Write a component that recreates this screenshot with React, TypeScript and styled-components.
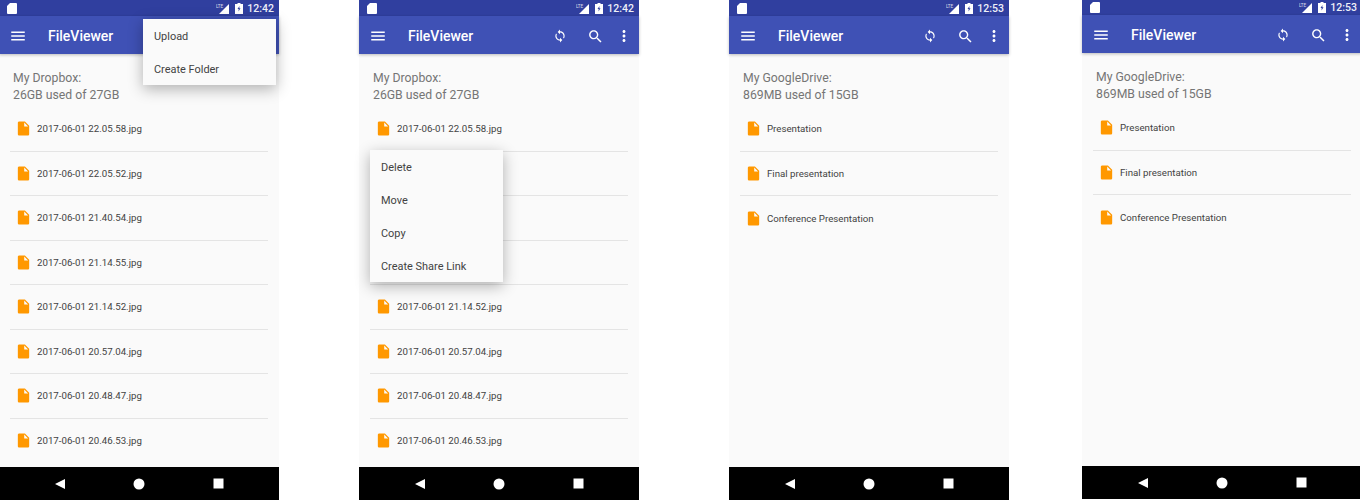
import type { ReactNode } from 'react'
import styled, { createGlobalStyle } from 'styled-components'

interface MenuProps {
  $left: number
  $top: number
}

interface PhoneProps {
  $width: number
  $gap: number
  $lift?: boolean
}

const GlobalStyle = createGlobalStyle`
  html, body {
    margin: 0;
    padding: 0;
    background: #ffffff;
    overflow: hidden;
  }
  body {
    font-family: Roboto, "Liberation Sans", sans-serif;
  }
`

const Screens = styled.div`
  display: flex;
  width: 1360px;
  height: 500px;
  overflow: hidden;
`
const Phone = styled.div<PhoneProps>`
  position: relative;
  display: flex;
  flex-direction: column;
  flex: none;
  width: ${(p) => p.$width}px;
  height: 500px;
  margin-left: ${(p) => p.$gap}px;
  margin-top: ${(p) => (p.$lift ? -1 : 0)}px;
  background: #fafafa;
`
const StatusBar = styled.div`
  display: flex;
  align-items: center;
  flex: none;
  height: 16px;
  padding: 0 5px 0 8px;
  background: #303f9f;
  color: #ffffff;
`
const StatusRight = styled.div`
  display: flex;
  align-items: center;
  margin-left: auto;
`
const BatteryIcon = styled.svg`
  margin-left: 5px;
`
const Clock = styled.span`
  margin-left: 4px;
  font-size: 10.5px;
  font-weight: 500;
  opacity: 0.92;
`
const AppBar = styled.div`
  display: flex;
  align-items: center;
  flex: none;
  box-sizing: border-box;
  height: 38px;
  padding: 2px 3px 0 10px;
  background: #3f51b5;
  color: #ffffff;
  box-shadow: 0 1px 3px rgba(0, 0, 0, 0.25);
`
const Title = styled.div`
  margin-left: 21px;
  font-size: 14px;
  font-weight: 500;
`
const Actions = styled.div`
  display: flex;
  align-items: center;
  margin-left: auto;
`
const ActionSlot = styled.div<{ $width: number }>`
  display: flex;
  justify-content: center;
  width: ${(p) => p.$width}px;
`
const Account = styled.div`
  flex: none;
  padding: 16px 14px 0;
  font-size: 12.25px;
  line-height: 17px;
  color: #757575;
`
const FileList = styled.div`
  flex: 1;
  padding: 3px 11px 0;
  overflow: hidden;
`
const FileRow = styled.div`
  display: flex;
  align-items: center;
  height: 44.5px;
  box-sizing: border-box;
  padding-left: 5px;
  border-bottom: 1px solid #e4e4e4;
  font-size: 9.7px;
  color: #424242;
  &:last-child {
    border-bottom: none;
  }
`
const FileName = styled.span`
  margin-left: 5px;
`
const FileIcon = styled.svg`
  flex: none;
  width: 17px;
  height: 19px;
  fill: #ff9800;
`
const NavBar = styled.div`
  display: flex;
  align-items: center;
  justify-content: center;
  flex: none;
  height: 33px;
  background: #000000;
`
const NavSlot = styled.div`
  display: flex;
  justify-content: center;
  width: 79px;
`
const Menu = styled.div<MenuProps>`
  position: absolute;
  left: ${(p) => p.$left}px;
  top: ${(p) => p.$top}px;
  width: 133px;
  background: #fafafa;
  box-shadow: 0 4px 14px rgba(0, 0, 0, 0.3);
`
const MenuItem = styled.div`
  display: flex;
  align-items: center;
  box-sizing: border-box;
  height: 33px;
  padding: 1px 0 0 11px;
  font-size: 10.95px;
  color: #424242;
`

const ICON = {
  menu: 'M3 18h18v-2H3v2zm0-5h18v-2H3v2zm0-7v2h18V6H3z',
  sync: 'M12 4V1L8 5l4 4V6c3.31 0 6 2.69 6 6 0 1.01-.25 1.97-.7 2.8l1.46 1.46C19.54 15.03 20 13.57 20 12c0-4.42-3.58-8-8-8zm0 14c-3.31 0-6-2.69-6-6 0-1.01.25-1.97.7-2.8L5.24 7.74C4.46 8.97 4 10.43 4 12c0 4.42 3.58 8 8 8v3l4-4-4-4v3z',
  search:
    'M15.5 14h-.79l-.28-.27C15.41 12.59 16 11.11 16 9.5 16 5.91 13.09 3 9.5 3S3 5.91 3 9.5 5.91 16 9.5 16c1.61 0 3.09-.59 4.23-1.57l.27.28v.79l5 4.99L20.49 19l-4.99-5zm-6 0C7.01 14 5 11.99 5 9.5S7.01 5 9.5 5 14 7.01 14 9.5 11.99 14 9.5 14z',
  more: 'M12 8c1.1 0 2-.9 2-2s-.9-2-2-2-2 .9-2 2 .9 2 2 2zm0 2c-1.1 0-2 .9-2 2s.9 2 2 2 2-.9 2-2-.9-2-2-2zm0 6c-1.1 0-2 .9-2 2s.9 2 2 2 2-.9 2-2-.9-2-2-2z',
  file: 'M6 2c-1.1 0-1.99.9-1.99 2L4 20c0 1.1.89 2 1.99 2H18c1.1 0 2-.9 2-2V8l-6-6H6zm7 7V3.5L18.5 9H13z',
}

function BarIcon({ d, size = 18 }: { d: string; size?: number }) {
  return (
    <svg width={size} height={size} viewBox="0 0 24 24" fill="#ffffff">
      <path d={d} />
    </svg>
  )
}

function Screen({
  time,
  heading,
  usage,
  files,
  width,
  gap,
  lift,
  children,
}: {
  time: string
  heading: string
  usage: string
  files: string[]
  width: number
  gap: number
  lift?: boolean
  children?: ReactNode
}) {
  return (
    <Phone $width={width} $gap={gap} $lift={lift}>
      <StatusBar>
        <svg width="10" height="11" viewBox="0 0 10 11" fill="#ffffff">
          <path d="M3 0h6a1 1 0 0 1 1 1v9a1 1 0 0 1-1 1H1a1 1 0 0 1-1-1V3z" />
        </svg>
        <StatusRight>
          <svg width="14" height="11" viewBox="0 0 14 11" fill="#ffffff">
            <path d="M13 1v10H3z" />
            <text x="0" y="4.5" fontSize="4.5" fontFamily="Roboto, sans-serif" opacity="0.8">
              LTE
            </text>
          </svg>
          <BatteryIcon width="8" height="11" viewBox="0 0 8 11" fill="#ffffff">
            <path d="M2.5 0h3v1H8v10H0V1h2.500z" />
            <path d="M4.500 3 2.500 6h1.200L3.500 8.500 5.500 5.200H4.300z" fill="#303f9f" />
          </BatteryIcon>
          <Clock>{time}</Clock>
        </StatusRight>
      </StatusBar>
      <AppBar>
        <BarIcon d={ICON.menu} />
        <Title>FileViewer</Title>
        <Actions>
          <ActionSlot $width={36}>
            <BarIcon d={ICON.sync} size={14} />
          </ActionSlot>
          <ActionSlot $width={34}>
            <BarIcon d={ICON.search} size={17} />
          </ActionSlot>
          <ActionSlot $width={24}>
            <BarIcon d={ICON.more} />
          </ActionSlot>
        </Actions>
      </AppBar>
      <Account>
        {heading}
        <br />
        {usage}
      </Account>
      <FileList>
        {files.map((name) => (
          <FileRow key={name}>
            <FileIcon viewBox="0 0 24 24">
              <path d={ICON.file} />
            </FileIcon>
            <FileName>{name}</FileName>
          </FileRow>
        ))}
      </FileList>
      <NavBar>
        <NavSlot>
          <svg width="12" height="12" viewBox="0 0 12 12" fill="#ffffff">
            <path d="M11 1v10L1 6z" />
          </svg>
        </NavSlot>
        <NavSlot>
          <svg width="12" height="12" viewBox="0 0 12 12" fill="#ffffff">
            <circle cx="6" cy="6" r="5.5" />
          </svg>
        </NavSlot>
        <NavSlot>
          <svg width="11" height="11" viewBox="0 0 11 11" fill="#ffffff">
            <path d="M.5.5h10v10H.5z" />
          </svg>
        </NavSlot>
      </NavBar>
      {children}
    </Phone>
  )
}

const DROPBOX_FILES = [
  '2017-06-01 22.05.58.jpg',
  '2017-06-01 22.05.52.jpg',
  '2017-06-01 21.40.54.jpg',
  '2017-06-01 21.14.55.jpg',
  '2017-06-01 21.14.52.jpg',
  '2017-06-01 20.57.04.jpg',
  '2017-06-01 20.48.47.jpg',
  '2017-06-01 20.46.53.jpg',
]

const DRIVE_FILES = ['Presentation', 'Final presentation', 'Conference Presentation']

export default function App(): JSX.Element {
  return (
    <Screens>
      <GlobalStyle />
      <Screen
        time="12:42"
        heading="My Dropbox:"
        usage="26GB used of 27GB"
        files={DROPBOX_FILES}
        width={280}
        gap={-1}
      >
        <Menu $left={144} $top={19}>
          <MenuItem>Upload</MenuItem>
          <MenuItem>Create Folder</MenuItem>
        </Menu>
      </Screen>
      <Screen
        time="12:42"
        heading="My Dropbox:"
        usage="26GB used of 27GB"
        files={DROPBOX_FILES}
        width={280}
        gap={80}
      >
        <Menu $left={11} $top={150}>
          <MenuItem>Delete</MenuItem>
          <MenuItem>Move</MenuItem>
          <MenuItem>Copy</MenuItem>
          <MenuItem>Create Share Link</MenuItem>
        </Menu>
      </Screen>
      <Screen
        time="12:53"
        heading="My GoogleDrive:"
        usage="869MB used of 15GB"
        files={DRIVE_FILES}
        width={280}
        gap={90}
      />
      <Screen
        time="12:53"
        heading="My GoogleDrive:"
        usage="869MB used of 15GB"
        files={DRIVE_FILES}
        width={280}
        gap={73}
        lift
      />
    </Screens>
  )
}
